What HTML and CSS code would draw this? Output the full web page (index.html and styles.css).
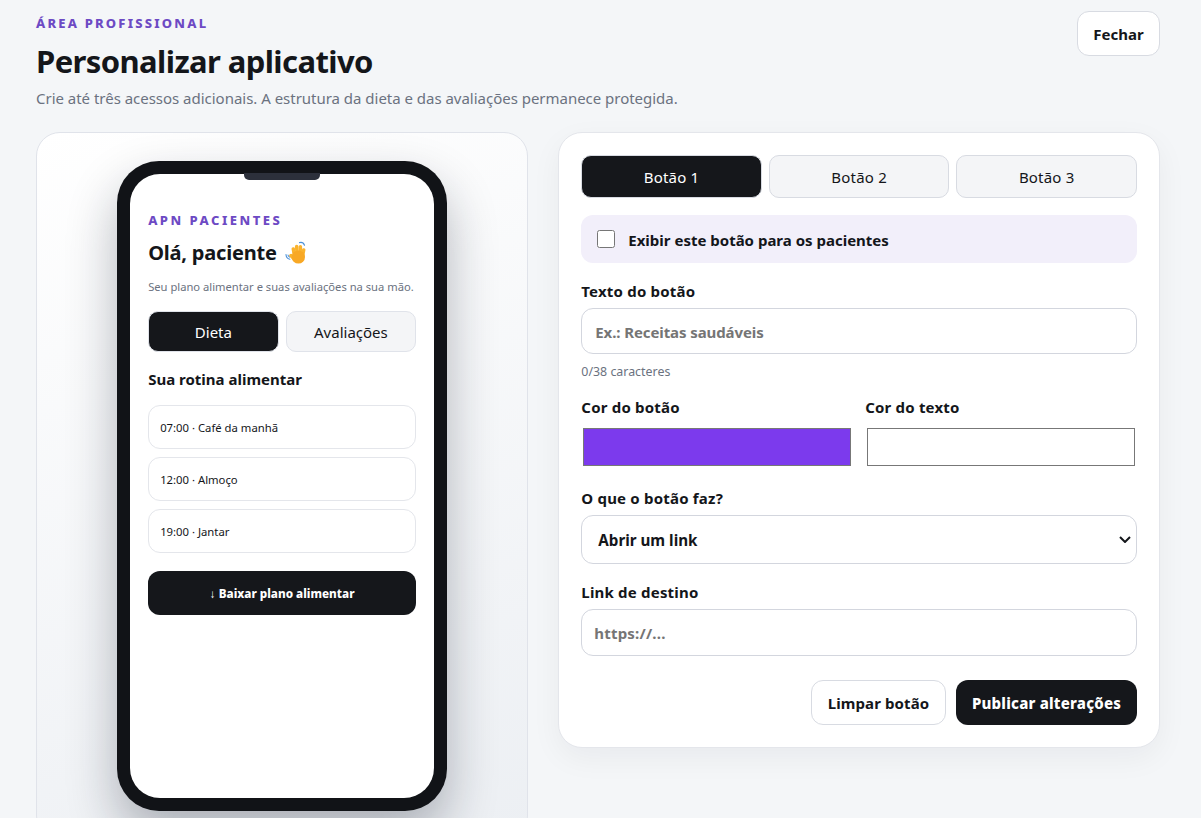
FILE: index.html
```html
<!DOCTYPE html>
<html lang="pt-BR">
<head>
<meta charset="utf-8">
<title>Personalizar aplicativo</title>
<link rel="stylesheet" href="styles.css">
</head>
<body>
<main class="page">
  <header class="top">
    <div class="heading">
      <p class="eyebrow">ÁREA PROFISSIONAL</p>
      <h1>Personalizar aplicativo</h1>
      <p class="lead">Crie até três acessos adicionais. A estrutura da dieta e das avaliações permanece protegida.</p>
    </div>
    <button class="close">Fechar</button>
  </header>
  <div class="grid">
    <section class="preview">
      <div class="phone">
        <div class="notch"></div>
        <div class="screen">
          <p class="brand">APN PACIENTES</p>
          <h2>Olá, paciente
            <svg class="wave" viewBox="0 0 24 24" role="img" aria-label="Mão acenando">
              <g fill="none" stroke="#4a90d9" stroke-width="1.1" stroke-linecap="round">
                <path d="M15.5 1.6c2.2-.6 4.2.5 5 2.6"/>
                <path d="M2 13.5c.1 2.4 1.6 4.2 3.8 4.8"/>
                <path d="M4 14c.2 1 .7 1.7 1.6 2.1"/>
              </g>
              <g fill="none" stroke="#fab32e" stroke-width="3.5" stroke-linecap="round">
                <path d="M10.5 15 9.3 8"/>
                <path d="M13 14l-.3-8.6"/>
                <path d="M16 14l.4-8.2"/>
                <path d="M18.5 15l1.2-6"/>
                <path d="M11 19 7 14.5"/>
              </g>
              <circle cx="14.4" cy="16" r="6.6" fill="#f8a825"/>
            </svg>
          </h2>
          <p class="sub">Seu plano alimentar e suas avaliações na sua mão.</p>
          <div class="ptabs">
            <button class="ptab on">Dieta</button>
            <button class="ptab">Avaliações</button>
          </div>
          <h3>Sua rotina alimentar</h3>
          <div class="meal">07:00 · Café da manhã</div>
          <div class="meal">12:00 · Almoço</div>
          <div class="meal">19:00 · Jantar</div>
          <button class="download">↓ Baixar plano alimentar</button>
        </div>
      </div>
    </section>
    <section class="panel">
      <div class="tabs">
        <button class="tab on">Botão 1</button>
        <button class="tab">Botão 2</button>
        <button class="tab">Botão 3</button>
      </div>
      <label class="toggle"><input type="checkbox"><span>Exibir este botão para os pacientes</span></label>
      <label class="label first" for="t">Texto do botão</label>
      <input class="field" id="t" type="text" placeholder="Ex.: Receitas saudáveis">
      <p class="count">0/38 caracteres</p>
      <div class="colors">
        <div>
          <label class="label" for="c1">Cor do botão</label>
          <input class="swatch" id="c1" type="color" value="#7c3aed">
        </div>
        <div>
          <label class="label" for="c2">Cor do texto</label>
          <input class="swatch" id="c2" type="color" value="#ffffff">
        </div>
      </div>
      <label class="label action" for="s">O que o botão faz?</label>
      <select class="select" id="s"><option>Abrir um link</option></select>
      <label class="label dest" for="l">Link de destino</label>
      <input class="field tall" id="l" type="text" placeholder="https://...">
      <div class="actions">
        <button class="ghost">Limpar botão</button>
        <button class="publish">Publicar alterações</button>
      </div>
    </section>
  </div>
</main>
</body>
</html>
```

FILE: styles.css
```css
* { box-sizing: border-box; }
html, body { margin: 0; height: 100%; overflow: hidden; }
body { background: #f4f6f8; color: #14161a; font-family: "Noto Sans", "Open Sans", sans-serif; }
button, input, select { font-family: inherit; }
p, h1, h2, h3 { margin: 0; }
.page { padding: 11px 41px 0 36px; }
.top { display: flex; justify-content: space-between; align-items: flex-start; }
.eyebrow { font-size: 13px; font-weight: 800; letter-spacing: 2.2px; color: #6d4ac4; line-height: 24px; }
h1 { font-size: 31px; font-weight: 700; letter-spacing: -.6px; line-height: 40px; margin-top: 6px; }
.lead { font-size: 15px; letter-spacing: -.02px; color: #6b7280; line-height: 20px; margin-top: 7px; }
.close { width: 83px; height: 45px; background: #fff; border: 1px solid #d8dbe2; border-radius: 12px; font-size: 15px; font-weight: 700; color: #14161a; }
.grid { display: grid; grid-template-columns: 45fr 55fr; gap: 30px; align-items: start; margin-top: 24px; }
.preview { height: 708px; padding: 28px 0; border: 1px solid #e0e3ea; border-radius: 24px; background: linear-gradient(160deg, #fff, #eceff3); display: flex; justify-content: center; }
.phone { position: relative; width: 330px; height: 650px; background: #111317; border-radius: 42px; padding: 13px; box-shadow: 0 24px 50px rgba(17, 24, 39, .3); }
.notch { position: absolute; top: 12px; left: 127px; width: 76px; height: 7px; background: #2c303b; border-radius: 0 0 5px 5px; }
.screen { height: 100%; background: #fff; border-radius: 30px; padding: 36px 18px 0; }
.brand { font-size: 13px; font-weight: 800; letter-spacing: 2.5px; color: #6d4ac4; line-height: 20px; }
h2 { font-size: 20px; font-weight: 700; letter-spacing: -.2px; line-height: 28px; margin-top: 9px; }
.wave { width: 24px; height: 24px; vertical-align: -5px; margin-left: 2px; }
.sub { font-size: 11.2px; color: #6b7280; line-height: 16px; margin-top: 12px; }
.ptabs { display: grid; grid-template-columns: 1fr 1fr; gap: 7px; margin-top: 16px; }
.ptab { height: 41px; border: 1px solid #e0e3ea; border-radius: 10px; background: #f4f5f7; color: #14161a; font-size: 15px; }
.ptab.on, .tab.on { background: #15171b; color: #fff; }
h3 { font-size: 15px; font-weight: 700; line-height: 20px; margin-top: 17px; }
.meal { height: 44px; border: 1px solid #e4e6eb; border-radius: 12px; display: flex; align-items: center; padding: 0 11px; font-size: 11.3px; margin-bottom: 8px; }
h3 + .meal { margin-top: 16px; }
.download { width: 100%; height: 44px; border: 0; border-radius: 12px; background: #15171b; color: #fff; font-size: 11.7px; font-weight: 800; margin-top: 10px; }
.panel { background: #fff; border: 1px solid #e4e6eb; border-radius: 24px; padding: 22px; box-shadow: 0 10px 30px rgba(17, 24, 39, .05); }
.tabs { display: grid; grid-template-columns: repeat(3, 1fr); gap: 7px; }
.tab { height: 43px; border: 1px solid #d8dbe2; border-radius: 10px; background: #f4f5f7; color: #14161a; font-size: 15px; letter-spacing: .2px; }
.toggle { display: flex; align-items: center; gap: 13px; height: 48px; margin-top: 17px; padding: 0 16px; background: #f2effa; border-radius: 12px; font-size: 15px; font-weight: 700; }
.toggle span { padding-top: 1px; }
.toggle input { width: 18px; height: 18px; margin: 0; }
.label { display: block; font-size: 15px; font-weight: 700; letter-spacing: .2px; line-height: 20px; margin-bottom: 7px; }
.first { margin-top: 18px; }
.field { display: block; width: 100%; height: 46px; border: 1px solid #d3d6de; border-radius: 12px; padding: 1px 13px 0; font-size: 15px; font-weight: 700; letter-spacing: -.1px; background: #fff; }
.field::placeholder { color: #757575; opacity: 1; }
.tall { height: 47px; padding: 0 12px; letter-spacing: .2px; }
.count { font-size: 12.4px; color: #6b7280; line-height: 16px; margin-top: 10px; }
.colors { display: grid; grid-template-columns: 1fr 1fr; gap: 12px; margin-top: 17px; }
.swatch { display: block; width: 100%; height: 46px; border: 0; background: #fff; margin: 0; padding: 0; }
.action { margin-top: 18px; margin-bottom: 7px; }
.select { display: block; width: 100%; height: 49px; border: 1px solid #d3d6de; border-radius: 12px; padding: 0 30px 0 16px; font-size: 15.2px; font-weight: 700; color: #14161a; appearance: none; background: #fff url("data:image/svg+xml,%3Csvg xmlns='http://www.w3.org/2000/svg' width='12' height='7' viewBox='0 0 12 7'%3E%3Cpath d='M1 1l5 5 5-5' fill='none' stroke='%2314161a' stroke-width='2'/%3E%3C/svg%3E") no-repeat right 5px center; }
.dest { margin-top: 18px; }
.actions { display: flex; justify-content: flex-end; gap: 10px; margin-top: 24px; }
.ghost { width: 135px; height: 45px; background: #fff; border: 1px solid #d8dbe2; border-radius: 12px; font-size: 15px; font-weight: 700; letter-spacing: .1px; color: #14161a; }
.publish { width: 181px; height: 45px; background: #15171b; border: 0; border-radius: 12px; font-size: 15px; font-weight: 800; letter-spacing: .2px; color: #fff; }
```
